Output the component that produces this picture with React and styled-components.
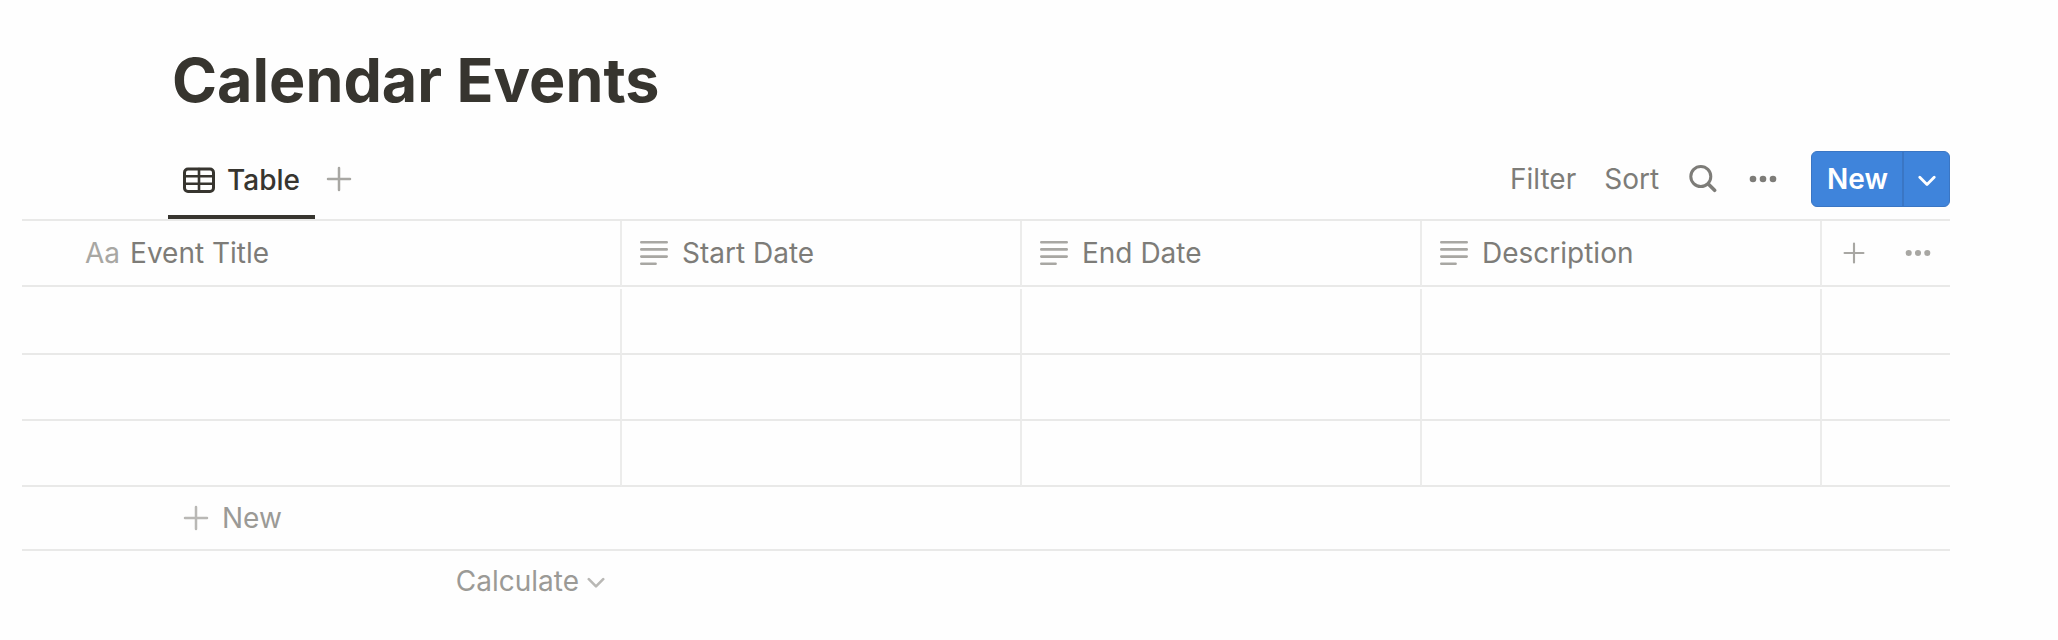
import React from "react";
import styled, { createGlobalStyle } from "styled-components";

const GlobalStyle = createGlobalStyle`
  * {
    box-sizing: border-box;
  }

  body {
    margin: 0;
    background: #fefefe;
    color: #37352f;
    font-family: Inter, "Liberation Sans", sans-serif;
    font-size: 28px;
    line-height: 40px;
  }

  button {
    border: 0;
    padding: 0;
    background: none;
    color: inherit;
    font: inherit;
    cursor: pointer;
  }
`;

const Page = styled.main`
  padding: 40px 108px 28px 22px;
`;

const Title = styled.h1`
  margin: 0;
  padding-left: 150px;
  font-size: 61px;
  font-weight: 700;
  line-height: 80px;
`;

const Toolbar = styled.div`
  display: flex;
  align-items: center;
  justify-content: space-between;
  height: 80px;
  margin-top: 19px;
  padding-left: 146px;
`;

const Tabs = styled.div`
  display: flex;
  align-items: center;
  align-self: stretch;
  gap: 10px;
`;

const Tab = styled.button`
  display: flex;
  align-items: center;
  align-self: stretch;
  gap: 12px;
  padding: 5px 15px 0;
  border-bottom: 4px solid #37352f;
  font-weight: 500;
`;

const IconButton = styled.button`
  display: flex;
  align-items: center;
  justify-content: center;
  width: ${props => (props.$dark ? "32px" : "28px")};
  color: ${props => (props.$dark ? "#7d7c78" : "#a8a7a3")};
`;

const Actions = styled.div`
  display: flex;
  align-items: center;
  gap: 28px;
  color: #7d7c78;
`;

const Split = styled.div`
  display: flex;
  height: 56px;
  margin-left: 4px;
  overflow: hidden;
  border: 1px solid #3a76c4;
  border-radius: 6px;
  background: #3f84db;
  color: white;
  font-weight: 600;
`;

const SplitMain = styled.button`
  padding: 0 14px 0 15px;
  border-right: 2px solid #3a76c4;
`;

const SplitMenu = styled.button`
  display: flex;
  align-items: center;
  justify-content: center;
  width: 45px;
`;

const Table = styled.table`
  width: 100%;
  table-layout: fixed;
  border-collapse: separate;
  border-spacing: 0;
  border-top: 2px solid #e9e9e8;

  tbody::before {
    content: "";
    display: table-row;
    height: 2px;
  }
`;

const Col = styled.col`
  width: ${props => props.$width};
`;

const HeadCell = styled.th`
  height: 66px;
  padding: 0 0 0 ${props => (props.$first ? "63px" : "18px")};
  border-right: ${props => (props.$last ? "0" : "2px solid #ececeb")};
  border-bottom: 2px solid #e9e9e8;
  color: #7d7c78;
  font-weight: 400;
  text-align: left;
`;

const HeadLabel = styled.div`
  display: flex;
  align-items: center;
  gap: ${props => (props.$tight ? "10px" : "14px")};
`;

const Prefix = styled.span`
  color: #a8a7a3;
`;

const HeadTools = styled.div`
  display: flex;
  align-items: center;
  gap: 36px;
`;

const Cell = styled.td`
  height: 66px;
  padding: 0;
  border-right: ${props => (props.$last ? "0" : "2px solid #ececeb")};
  border-bottom: 2px solid #e9e9e8;
`;

const NewRow = styled.button`
  display: flex;
  align-items: center;
  gap: 12px;
  width: 100%;
  height: 64px;
  padding-left: 160px;
  border-bottom: 2px solid #e9e9e8;
  color: #9b9a96;
`;

const Footer = styled.div`
  display: flex;
  justify-content: flex-end;
  width: 600px;
  height: 60px;
  padding-right: 17px;
`;

const Calculate = styled.button`
  display: flex;
  align-items: center;
  gap: 8px;
  color: #9b9a96;
`;

const Svg = styled.svg`
  display: block;
  flex: none;
  fill: none;
  stroke: ${props => props.$color || "currentColor"};
  stroke-linecap: round;
  stroke-linejoin: round;
`;

const TableIcon = () => (
  <Svg width="32" height="26" viewBox="0 0 32 26" strokeWidth="3">
    <rect x="1.5" y="2" width="29" height="22.5" rx="3.5" />
    <path d="M2 9.3H30M2 16.8H30M16 2V24" strokeWidth="2.6" />
  </Svg>
);

const Plus = ({ size, color }) => (
  <Svg width={size} height={size} viewBox="0 0 28 28" strokeWidth="2.5" $color={color}>
    <path d="M14 3V25M3 14H25" />
  </Svg>
);

const Dots = ({ width }) => (
  <Svg width={width} height="28" viewBox="0 0 28 28">
    <g fill="currentColor" stroke="none">
      <circle cx="4" cy="14" r="3.3" />
      <circle cx="14" cy="14" r="3.3" />
      <circle cx="24" cy="14" r="3.3" />
    </g>
  </Svg>
);

const Search = () => (
  <Svg width="28" height="28" viewBox="0 0 28 28" strokeWidth="3">
    <circle cx="11.8" cy="11.5" r="10" />
    <path d="M19.3 19L25.6 25.3" strokeWidth="3.6" />
  </Svg>
);

const Chevron = ({ color, strokeWidth }) => (
  <Svg width="18" height="18" viewBox="0 0 18 18" strokeWidth={strokeWidth} $color={color}>
    <path d="M1.8 7.2L9 14.4L16.2 7.2" />
  </Svg>
);

const TextIcon = () => (
  <Svg width="28" height="26" viewBox="0 0 28 26" strokeWidth="2.6" $color="#a8a7a3">
    <path d="M1.3 2.2H26.7M1.3 9.4H26.7M1.3 16.6H26.7M1.3 23.8H15.6" />
  </Svg>
);

const columns = ["Start Date", "End Date", "Description"];
const rows = [1, 2, 3];

const App = () => {
  return (
    <>
      <GlobalStyle />
      <Page>
        <Title>Calendar Events</Title>
        <Toolbar>
          <Tabs>
            <Tab>
              <TableIcon />
              Table
            </Tab>
            <IconButton aria-label="Add view">
              <Plus size={28} />
            </IconButton>
          </Tabs>
          <Actions>
            <button>Filter</button>
            <button>Sort</button>
            <IconButton $dark aria-label="Search">
              <Search />
            </IconButton>
            <IconButton $dark aria-label="View options">
              <Dots width={28} />
            </IconButton>
            <Split>
              <SplitMain>New</SplitMain>
              <SplitMenu aria-label="New options">
                <Chevron strokeWidth={2.8} />
              </SplitMenu>
            </Split>
          </Actions>
        </Toolbar>

        <Table>
          <colgroup>
            <Col $width="600px" />
            {columns.map(name => (
              <Col key={name} $width="400px" />
            ))}
            <Col />
          </colgroup>
          <thead>
            <tr>
              <HeadCell $first>
                <HeadLabel $tight>
                  <Prefix>Aa</Prefix>
                  Event Title
                </HeadLabel>
              </HeadCell>
              {columns.map(name => (
                <HeadCell key={name}>
                  <HeadLabel>
                    <TextIcon />
                    {name}
                  </HeadLabel>
                </HeadCell>
              ))}
              <HeadCell $last>
                <HeadTools>
                  <IconButton aria-label="Add property">
                    <Plus size={24} />
                  </IconButton>
                  <IconButton aria-label="Property options">
                    <Dots width={26} />
                  </IconButton>
                </HeadTools>
              </HeadCell>
            </tr>
          </thead>
          <tbody>
            {rows.map(row => (
              <tr key={row}>
                <Cell />
                {columns.map(name => (
                  <Cell key={name} />
                ))}
                <Cell $last />
              </tr>
            ))}
          </tbody>
        </Table>
        <NewRow>
          <Plus size={28} color="#b9b8b5" />
          New
        </NewRow>
        <Footer>
          <Calculate>
            Calculate
            <Chevron color="#b9b8b5" strokeWidth={2.6} />
          </Calculate>
        </Footer>
      </Page>
    </>
  );
};

export default App;
